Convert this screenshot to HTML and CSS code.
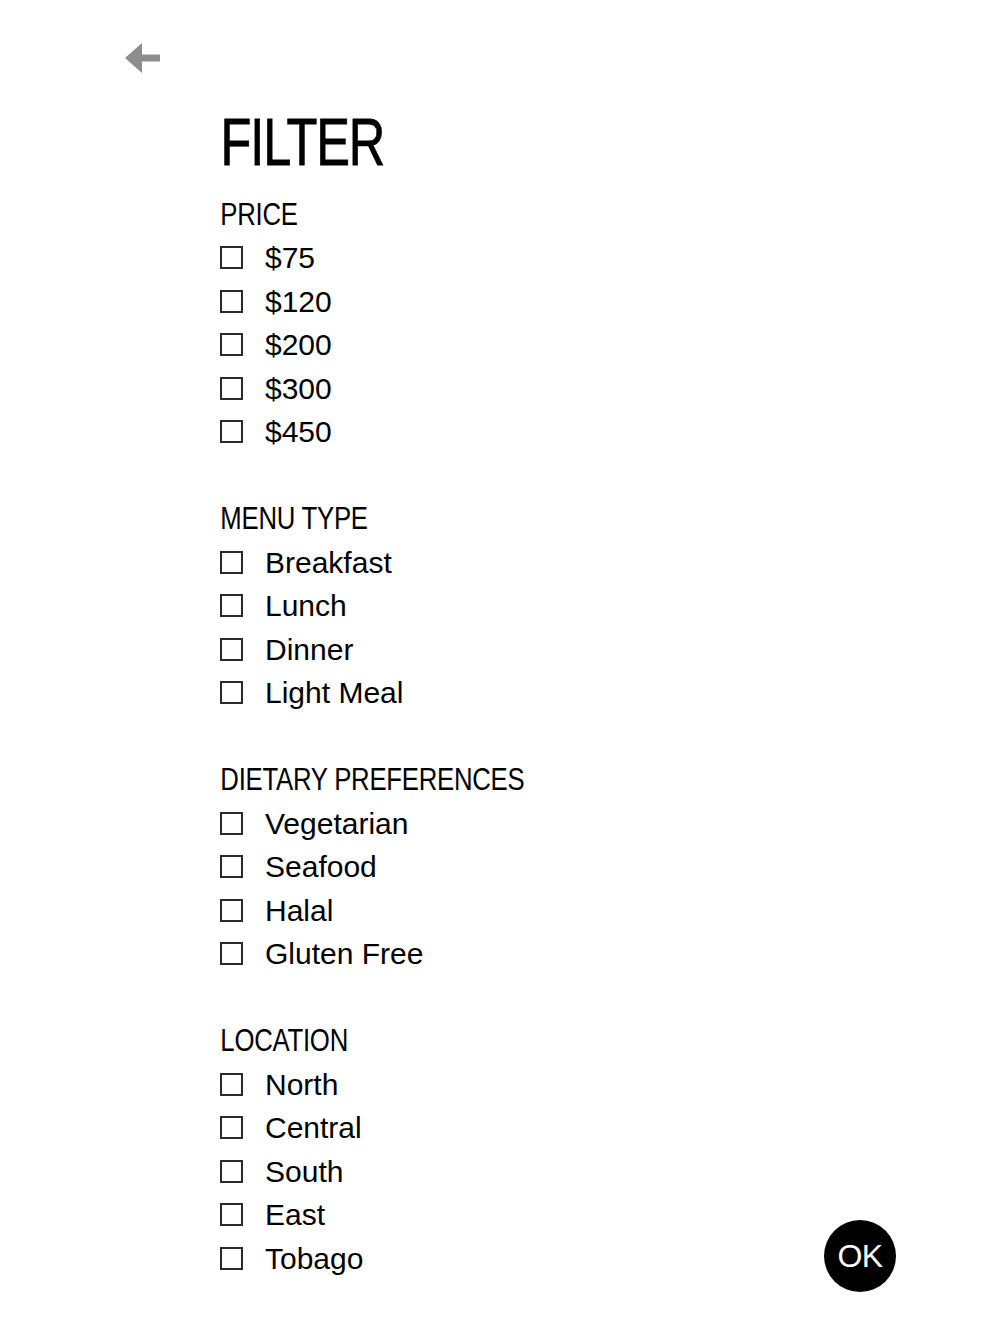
FILE: index.html
```html
<!DOCTYPE html>
<html>
<head>
<meta charset="utf-8">
<link rel="stylesheet" href="styles.css">
</head>
<body>
<div class="page">
  <button class="back" aria-label="Back">
    <svg width="38" height="34" viewBox="0 0 38 34"><path d="M1 16 L18 1 L18 12.5 L36 12.5 L36 19.5 L18 19.5 L18 31 Z" fill="#8d8d8f"/></svg>
  </button>
  <div class="content">
    <h1 class="title">FILTER</h1>
    <section class="group">
      <h2 class="group-title">PRICE</h2>
      <label class="row"><span class="box"></span><span class="label">$75</span></label>
      <label class="row"><span class="box"></span><span class="label">$120</span></label>
      <label class="row"><span class="box"></span><span class="label">$200</span></label>
      <label class="row"><span class="box"></span><span class="label">$300</span></label>
      <label class="row"><span class="box"></span><span class="label">$450</span></label>
    </section>
    <section class="group">
      <h2 class="group-title">MENU TYPE</h2>
      <label class="row"><span class="box"></span><span class="label">Breakfast</span></label>
      <label class="row"><span class="box"></span><span class="label">Lunch</span></label>
      <label class="row"><span class="box"></span><span class="label">Dinner</span></label>
      <label class="row"><span class="box"></span><span class="label">Light Meal</span></label>
    </section>
    <section class="group">
      <h2 class="group-title">DIETARY PREFERENCES</h2>
      <label class="row"><span class="box"></span><span class="label">Vegetarian</span></label>
      <label class="row"><span class="box"></span><span class="label">Seafood</span></label>
      <label class="row"><span class="box"></span><span class="label">Halal</span></label>
      <label class="row"><span class="box"></span><span class="label">Gluten Free</span></label>
    </section>
    <section class="group">
      <h2 class="group-title">LOCATION</h2>
      <label class="row"><span class="box"></span><span class="label">North</span></label>
      <label class="row"><span class="box"></span><span class="label">Central</span></label>
      <label class="row"><span class="box"></span><span class="label">South</span></label>
      <label class="row"><span class="box"></span><span class="label">East</span></label>
      <label class="row"><span class="box"></span><span class="label">Tobago</span></label>
    </section>
  </div>
  <button class="ok">OK</button>
</div>
</body>
</html>
```
FILE: styles.css
```css
html, body {
  margin: 0;
  padding: 0;
  background: #ffffff;
}
body {
  font-family: "Liberation Sans", Arial, sans-serif;
  color: #000;
}
.page {
  position: relative;
  width: 1000px;
  height: 1334px;
  padding-top: 42px;
  box-sizing: border-box;
}
.back {
  display: block;
  margin: 0 0 0 124px;
  padding: 0;
  border: 0;
  background: none;
  width: 38px;
  height: 34px;
}
.back svg {
  display: block;
}
.content {
  padding-left: 220px;
}
.title {
  margin: 32px 0 0 0;
  font-family: "Liberation Sans", Arial, sans-serif;
  font-weight: normal;
  font-size: 67px;
  line-height: 67px;
  letter-spacing: -1.5px;
  -webkit-text-stroke: 0.8px #000;
  transform: scaleX(0.755);
  transform-origin: 2px 50%;
}
.group {
  margin-top: 17.5px;
  margin-bottom: 43.5px;
}
.group + .group {
  margin-top: 0;
}
.group-title {
  margin: 0;
  font-family: "Liberation Sans", Arial, sans-serif;
  font-weight: normal;
  font-size: 31px;
  line-height: 43.5px;
  letter-spacing: -0.3px;
  height: 43.5px;
  transform: scaleX(0.83);
  transform-origin: 2px 50%;
}
.row {
  display: flex;
  align-items: center;
  height: 43.5px;
}
.box {
  width: 19px;
  height: 19px;
  border: 2px solid #2a2a2a;
  flex: none;
}
.label {
  margin-left: 22px;
  font-size: 30px;
  line-height: 43.5px;
  letter-spacing: 0;
}
.ok {
  position: absolute;
  left: 824px;
  top: 1220px;
  width: 72px;
  height: 72px;
  border-radius: 50%;
  border: 0;
  padding: 0;
  background: #000;
  color: #fff;
  font-family: "Liberation Sans", Arial, sans-serif;
  font-size: 32px;
  line-height: 72px;
  text-align: center;
  letter-spacing: -0.5px;
}
```
